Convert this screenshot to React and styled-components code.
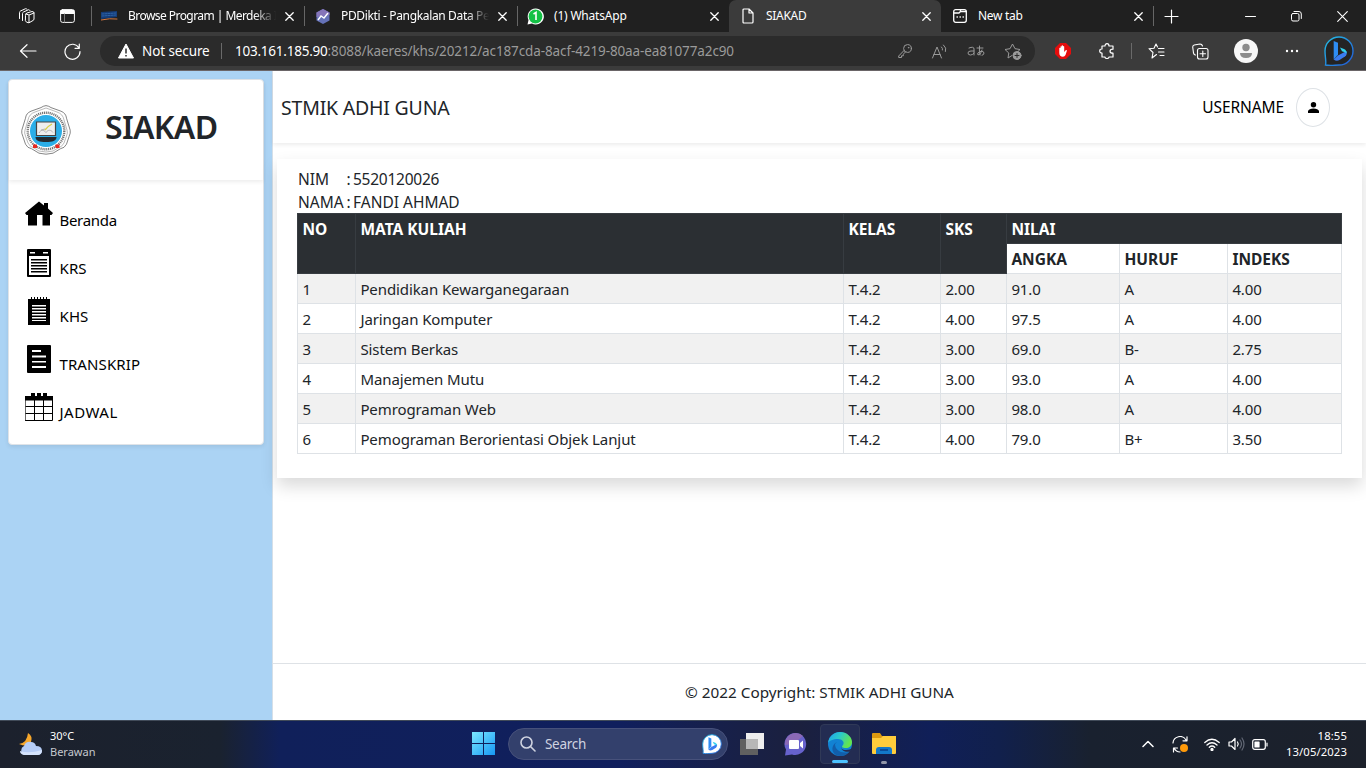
import React from "react";
import styled, { createGlobalStyle, css } from "styled-components";

const Global = createGlobalStyle`
  *, *::before, *::after { box-sizing: border-box; }
  html, body { margin: 0; padding: 0; overflow: hidden; }
  body { font: 15px/24px "Noto Sans", "Open Sans", sans-serif; color: #212529; letter-spacing: -0.1px; }
  svg { display: block; flex: none; }
`;

const Screen = styled.div`
  width: 1366px; height: 768px; display: flex; flex-direction: column; background: #fff; overflow: hidden;
`;

/* ---------- browser chrome ---------- */
const TabStrip = styled.div`
  flex: none; height: 32px; display: flex; background: #202020; color: #fff;
  font-size: 12px; line-height: 16px; letter-spacing: -0.2px;
`;
const StripIcons = styled.div`
  width: 91px; display: flex; align-items: center; gap: 25px; padding-left: 18px;
`;
const Tab = styled.div`
  width: ${(p) => p.$w}px; display: flex; align-items: center; padding: 0 10px 0 ${(p) => p.$pl || 10}px;
  position: relative;
  ${(p) => p.$active && css`background: #3b3b3b; border-radius: 7px 7px 0 0;`}
  ${(p) => p.$line && css`&::before { content: ""; width: 1px; height: 20px; background: #666; position: absolute; left: 0; top: 6px; }`}
`;
const TabTitle = styled.span`
  flex: 1; min-width: 0; margin-left: ${(p) => p.$ml || 9}px; margin-right: 9px; white-space: nowrap;
  letter-spacing: ${(p) => p.$ls || -0.2}px;
  ${(p) => p.$fade && css`mask-image: linear-gradient(90deg, #000 calc(100% - 22px), transparent);`}
`;
const WindowButtons = styled.div`
  flex: 1; display: flex; align-items: center; justify-content: flex-end; gap: 35px; padding-right: 18px;
`;
const NewTab = styled.div`
  width: 35px; display: flex; align-items: center; padding-left: 11px;
  position: relative;
  &::before { content: ""; width: 1px; height: 20px; background: #666; position: absolute; left: 0; top: 6px; }
`;
const Toolbar = styled.div`
  flex: none; height: 39px; display: flex; align-items: center; background: #3b3b3b; border-bottom: 1px solid #6b6668;
  color: #fff; padding-left: 19px;
`;
const NavIcons = styled.div`
  width: 81px; display: flex; gap: 27px; align-items: center;
`;
const Address = styled.div`
  width: 935px; height: 30px; border-radius: 15px; background: #2b2b2b; display: flex; align-items: center;
  padding: 0 13px 0 18px; font-size: 13.5px; line-height: 20px; white-space: nowrap;
`;
const Secure = styled.span`
  margin-left: 8px; width: 79px; letter-spacing: -0.1px;
`;
const Url = styled.span`
  flex: 1; margin-left: 13px; color: #9a9a9a; letter-spacing: -0.11px;
`;
const Host = styled.span`color: #fff; letter-spacing: -0.23px;`;
const Divider = styled.i`
  width: 1px; height: 16px; background: #6a6a6a;
`;
const AddressIcons = styled.div`
  display: flex; align-items: center; gap: 19px; color: #9a9a9a;
`;
const Extensions = styled.div`
  flex: none; display: grid; grid-template-columns: 56px 32px 16px 34px 54px 38px 54px 40px;
  align-items: center; justify-items: center;
`;

/* ---------- page ---------- */
const Page = styled.div`
  flex: 1; display: flex; min-height: 0;
`;
const Side = styled.aside`
  width: 273px; background: #abd3f4; border-right: 1px solid #d5dfe8; padding: 8px 8px 0;
`;
const SideCard = styled.div`
  height: 366px; background: #fff; border: 1px solid #dfe3e8; border-radius: 4px; box-shadow: 0 2px 4px rgba(0,0,0,.08);
`;
const Brand = styled.div`
  height: 100px; display: flex; align-items: center; padding: 0 0 0 12px; box-shadow: 0 2px 4px rgba(0,0,0,.075);
`;
const BrandName = styled.h2`
  margin: -7px 0 0 34px; font-size: 32px; line-height: 40px; font-weight: 600; letter-spacing: -0.7px;
`;
const Menu = styled.nav`
  padding: 21px 0 0 16px; color: #000;
`;
const MenuItem = styled.div`
  height: 48px; display: flex; gap: 6.5px; letter-spacing: ${(p) => p.$ls}px;
`;
const MenuLabel = styled.span`
  margin-top: 6.5px;
`;
const Main = styled.main`
  flex: 1; display: flex; flex-direction: column; min-width: 0;
`;
const Header = styled.header`
  height: 72px; display: flex; align-items: center; padding: 0 36px 0 8px; box-shadow: 0 2px 4px rgba(0,0,0,.075);
`;
const Title = styled.div`
  flex: 1; font-size: 19.5px; line-height: 30px; letter-spacing: -0.2px; padding-top: 1px;
`;
const User = styled.span`
  color: #000; margin-right: 12px; font-size: 15.5px; letter-spacing: -0.1px;
`;
const Avatar = styled.span`
  width: 34px; height: 39px; border: 1px solid #dee2e6; border-radius: 50%; display: flex; align-items: center; justify-content: center;
`;
const Panel = styled.section`
  margin: 16px 4px 0; height: 319px; background: #fff; padding: 8px 20px 0; box-shadow: 0 8px 16px rgba(0,0,0,.15);
`;
const Info = styled.dl`
  margin: 0 0 0 1px; display: grid; grid-template-columns: 48.5px 6.5px 1fr; grid-auto-rows: 23px; white-space: nowrap;
  font-size: 15.5px; letter-spacing: 0;
  dt, dd { margin: 0; }
`;
const Figure = styled.dd`letter-spacing: -0.25px;`;
const Table = styled.table`
  width: 1045px; border-collapse: collapse; table-layout: fixed; line-height: 20px;
  td, th { height: 30px; padding: 5px 4px 0 4.4px; border: 1px solid #dee2e6; text-align: left; vertical-align: top; }
  th { font-size: 15.5px; letter-spacing: 0; }
  tbody tr:nth-child(odd) { background: #f1f1f1; }
`;
const DarkCell = styled.th`
  background: #2b2f33; color: #fff;
  && { border-color: #373c41; }
`;
const Footer = styled.footer`
  margin-top: auto; height: 57px; border-top: 1px solid #dee2e6; text-align: center; padding-top: 16px;
  font-size: 15.3px; letter-spacing: 0;
`;

/* ---------- taskbar ---------- */
const Taskbar = styled.div`
  flex: none; height: 48px; border-top: 1px solid #414b59; display: flex; align-items: center; color: #fff;
  background: linear-gradient(90deg, #1c212d 0, #1a222f 220px, #10205a 280px, #101f5d 620px, #17204a 720px, #1b203e 800px, #101f58 930px, #11204c 1000px, #19212f 1090px, #1c212b 100%);
  font-size: 11px; line-height: 16px; letter-spacing: 0; padding-bottom: 1px;
`;
const Weather = styled.div`
  width: 471px; display: flex; align-items: center; gap: 7px; padding-left: 18px;
`;
const Condition = styled.div`color: #c5c8ce;`;
const Search = styled.div`
  width: 220px; height: 32px; margin: 0 12px; border-radius: 16px; background: #33406c; border: 1px solid #47517b;
  display: flex; align-items: center; padding: 0 5px 0 11px; font-size: 13.5px; color: #cfd3e0; letter-spacing: -0.3px;
`;
const SearchText = styled.span`flex: 1; margin-left: 9px;`;
const Apps = styled.div`
  display: flex; align-items: center;
`;
const AppButton = styled.div`
  width: ${(p) => p.$w}px; margin-left: ${(p) => p.$ml || 0}px; height: 40px; display: flex; align-items: center; justify-content: center; position: relative;
  ${(p) => p.$active && css`background: #232c52; border: 1px solid #303957; border-radius: 4px;`}
  ${(p) => p.$mark && css`&::after { content: ""; position: absolute; bottom: 0; width: ${p.$mark}px; height: 3px; border-radius: 2px; background: ${p.$active ? "#4cc2ff" : "#9297a9"}; }`}
`;
const Tray = styled.div`
  margin-left: auto; display: flex; align-items: center; padding-right: 19px;
`;
const TrayIcon = styled.span`margin-left: ${(p) => p.$ml}px;`;
const Clock = styled.div`
  width: 79px; text-align: right; letter-spacing: 0.1px; font-size: 11.3px;
`;

const Svg = ({ w = 16, h = w, vb = `0 0 ${w} ${h}`, sw = 1, color = "currentColor", children, ...r }) => (
  <svg width={w} height={h} viewBox={vb} fill="none" stroke={color} strokeWidth={sw} strokeLinecap="round" strokeLinejoin="round" {...r}>
    {children}
  </svg>
);
const Close = () => <Svg w={9} sw={1.3}><path d="M.8.8l7.4 7.4M8.2.8L.8 8.2" /></Svg>;

const BingMark = ({ w, h, light }) => (
  <svg width={w} height={h} viewBox="0 0 30 30">
    <defs>
      <linearGradient id={light ? "bl" : "bd"} x1="0" y1="0" x2="1" y2="1">
        <stop stopColor="#24bfe5" /><stop offset="1" stopColor="#2258d8" />
      </linearGradient>
    </defs>
    <path d="M15 1a14 14 0 1 1 0 28c-4 0-8 1-13.500 0 1-3-.5-8-.5-14A14 14 0 0 1 15 1z" fill={light ? "#fff" : "#242424"} stroke={`url(#${light ? "bl" : "bd"})`} strokeWidth="1.400" />
    <path d="M9.700 5l4.300 1.800v12l-4.300 4.700z" fill="#2e8df5" />
    <path d="M9.700 23.500l4.300-4 8.500-4.500q1 3.500-1.500 5.500l-5.500 3.500q-3 1.700-5.800-.5z" fill="#3b7cf0" />
    <path d="M16 11.500l4 1.500q3 1.500 2.500 4.500-.8-1.500-4.500-2.300z" fill="#32d3ed" />
  </svg>
);

const Logo = () => (
  <svg width="50" height="50" viewBox="0 0 50 50" fill="none">
    <path d="M25 .6q3 .4 5 2l10 3.600q5 2 5.500 7l3.700 12q.5 3-1 6l-2.700 8q-2 4-6 4.500l-7.500 4.500q-7 2-14 0L10.500 43.700q-4-.5-6-4.500l-2.700-8q-1.500-3-1-6l3.700-12q.5-5 5.500-7L20 2.600q2-1.600 5-2z" stroke="#777" strokeWidth=".9" />
    <path d="M25 3l11 4q6 2 7 8l3 10q1 3-.5 6l-2.500 7q-2 4-6 5l-5 3q-7 2-14 0l-5-3q-4-1-6-5l-2.500-7Q3 28 4 25l3-10q1-6 7-8z" stroke="#aaa" strokeWidth=".8" />
    <circle cx="25" cy="26" r="18.300" stroke="#444" strokeWidth="2.400" strokeDasharray="1 .7" pathLength="100" opacity=".75" />
    <circle cx="25" cy="26" r="16" fill="#2aaee8" />
    <path d="M15.500 17h19v13.500h-19z" fill="#eee" stroke="#444" strokeWidth="1.200" />
    <path d="M18 28c2-4 5-3 7-.5 2-3 5-3 7 0M20 25l4-1" stroke="#999" strokeWidth=".7" />
    <path d="M24 25q3-4 7-6" stroke="#d9cf45" strokeWidth="1.300" />
    <path d="M14.500 32h21c0 4-4 5-10.500 5s-10.500-1-10.500-5z" fill="#242b31" />
    <path d="M12 39.500h4v3.500h-4zM34.500 39.500h4v3.500h-4z" fill="#e8271f" />
  </svg>
);

const menu = [
  ["Beranda", -0.3, <path d="M14 .5l5 4V2h4v5.500l5 4.500-1.500 2H25v10.500h-7.500V14h-5.500v10.500H3V14H1.500L0 12z" fill="#000" stroke="none" />],
  ["KRS", 0.1, <g stroke="none"><path fillRule="evenodd" d="M3 0h22q1 0 1 1v26q0 1-1 1H3q-1 0-1-1V1q0-1 1-1zm1 7v19h20V7zM5 3v1.500h5V3zm13 0v1.500h5V3z" fill="#000" /><path d="M6 10h16v1.500H6zm0 3h16v1.500H6zm0 3h16v1.500H6zm0 3h16v1.500H6zm0 3h16v1.500H6z" fill="#000" /></g>],
  ["KHS", 0.1, <g stroke="none"><path d="M3 2h22v26H3zM6 0h1v3H6zm3 0h1v3H9zm3 0h1v3h-1zm3 0h1v3h-1zm3 0h1v3h-1zm3 0h1v3h-1z" fill="#000" /><path d="M7 8h14v1.500H7zm0 3h14v1.500H7zm0 3h14v1.500H7zm0 3h14v1.500H7zm0 3h14v1.500H7zm0 3h14v1H7z" fill="#fff" /></g>],
  ["TRANSKRIP", 0.1, <g stroke="none"><rect x="2" width="24" height="28" rx="1" fill="#000" /><path d="M7 5h9v2H7zm0 5.500h14v2H7zM7 16h14v1.500H7zm0 5h14v2H7z" fill="#fff" /></g>],
  ["JADWAL", 0.5, <g stroke="none"><path d="M6 0h4v4H6zm6 0h4v4h-4zm6 0h4v4h-4zM0 3h28v4H0z" fill="#000" /><path d="M.5 7h27v20.500H.5zM9.500 7v20M18.500 7v20M1 13.500h27M1 20.500h27" stroke="#000" /></g>],
];

const rows = [
  ["1", "Pendidikan Kewarganegaraan", "T.4.2", "2.00", "91.0", "A", "4.00"],
  ["2", "Jaringan Komputer", "T.4.2", "4.00", "97.5", "A", "4.00"],
  ["3", "Sistem Berkas", "T.4.2", "3.00", "69.0", "B-", "2.75"],
  ["4", "Manajemen Mutu", "T.4.2", "3.00", "93.0", "A", "4.00"],
  ["5", "Pemrograman Web", "T.4.2", "3.00", "98.0", "A", "4.00"],
  ["6", "Pemograman Berorientasi Objek Lanjut", "T.4.2", "4.00", "79.0", "B+", "3.50"],
];
const columns = [58, 488, 97, 66, 113, 108, 114];

function BrowserTabs() {
  return (
    <TabStrip>
      <StripIcons>
        <Svg w={17}><path d="M7.500 7q0-1.500 1.500-2l5-1.500q2 0 2 1.500v6q0 1-1 1.500l-4 2.300q-3 0-3.500-1.800zM8 6l3 1 5-2M11 7.500v7M4.500 12.500v-7q0-1 1-1.500l5-2.300q1 0 1.500.8M1.500 10.500V4.500q0-1 1-1.500l5-2.300q1 0 1.500.5" /></Svg>
        <Svg w={15} h={14}><rect x=".6" y=".6" width="13.800" height="12.800" rx="2" /><path d="M1 1.500h13v3H1z" fill="#fff" /><path d="M4.500 5v8" stroke="#777" /></Svg>
      </StripIcons>
      <Tab $w={213} $line>
        <Svg w={17} h={10} stroke="none"><path d="M0 1l16-1v6L0 8z" fill="#153c78" /><path d="M1 3l14-1M1 5l14-1" stroke="#2d62a5" strokeDasharray="2 1" /><path d="M0 9q9-2 16-1" stroke="#d77a42" /></Svg>
        <TabTitle $fade $ml={10} $ls={-0.55}>Browse Program | Merdeka I</TabTitle><Close />
      </Tab>
      <Tab $w={213} $line $pl={12}>
        <svg width="14" height="15"><path d="M7 0l6.500 3.500v8L7 15 .5 11.500v-8z" fill="#6572b8" /><path d="M7 0l6.500 3.500V6L.5 8V3.500z" fill="#8575b9" /><path d="M2 11l3-4 3 2 4-5" stroke="#fff" strokeWidth="1.400" fill="none" /></svg>
        <TabTitle $fade $ml={11} $ls={-0.35}>PDDikti - Pangkalan Data Pe</TabTitle><Close />
      </Tab>
      <Tab $w={212} $line>
        <svg width="17" height="17"><path d="M8.500.5a8 8 0 1 1-3.500 15l-4.500 1L1.500 12A8 8 0 0 1 8.500.5z" fill="#fff" /><circle cx="8.500" cy="8.500" r="6.900" fill="#14c146" /><path d="M6.500 6L9 4.500V12" stroke="#fff" strokeWidth="1.600" fill="none" /></svg>
        <TabTitle $ml={10}>(1) WhatsApp</TabTitle><Close />
      </Tab>
      <Tab $w={212} $active $pl={13}>
        <Svg w={12} h={16} sw={1.2}><path d="M1 2q0-1 1-1h5l4 4v9q0 1-1 1H2q-1 0-1-1zM7 1v4h4" /></Svg>
        <TabTitle $ml={12} $ls={-0.3}>SIAKAD</TabTitle><Close />
      </Tab>
      <Tab $w={212} $pl={12}>
        <Svg w={14} h={14} sw={1.3}><rect x=".7" y=".7" width="12.600" height="12.600" rx="2" /><path d="M1 4h5l1.500-1.500V1M7.500 2.500h5.800M4 8h.4M7 8h.4M10 8h.4" /></Svg>
        <TabTitle $ml={11} $ls={-0.3}>New tab</TabTitle><Close />
      </Tab>
      <NewTab><Svg w={15} sw={1.2}><path d="M7.500 1v13M1 7.500h13" /></Svg></NewTab>
      <WindowButtons>
        <Svg w={11}><path d="M.5 5.500h10" /></Svg>
        <Svg w={11}><rect x=".5" y="2.500" width="7.500" height="7.500" rx="1.500" /><path d="M3 .5h5q2.300 0 2.300 2.500v4.500" /></Svg>
        <Svg w={11} sw={1.1}><path d="M.7.7l9.600 9.600M10.300.7L.7 10.300" /></Svg>
      </WindowButtons>
    </TabStrip>
  );
}

function BrowserToolbar() {
  return (
    <Toolbar>
      <NavIcons>
        <Svg w={18} h={14} sw={1.2}><path d="M17 7H1.500M8 .7L1.500 7 8 13.300" /></Svg>
        <Svg w={17} sw={1.2}><path d="M15 5A7.500 7.500 0 1 0 16 8.500M15.300 1v4.300H11" /></Svg>
      </NavIcons>
      <Address>
        <svg width="16" height="16"><path d="M8 1l7.500 14H.5z" fill="#fff" stroke="#fff" strokeLinejoin="round" /><path d="M8 5.500v5M8 12v1.500" stroke="#2b2b2b" strokeWidth="1.500" /></svg>
        <Secure>Not secure</Secure><Divider />
        <Url><Host>103.161.185.90</Host>:8088/kaeres/khs/20212/ac187cda-8acf-4219-80aa-ea81077a2c90</Url>
        <AddressIcons>
          <Svg w={14}><circle cx="9.500" cy="4.500" r="3.900" /><circle cx="10.500" cy="3.700" r=".3" /><path d="M6 6.500L.7 12v1.500h2.800v-1.700h1.800v-1.600L7.500 8" /></Svg>
          <Svg w={17} h={15}><path d="M1.500 14L6 3l4.500 11M3 10.500h6M10.500 3q1.500 1.500 1 3M12.500 1q3.500 3 2 6.500" /></Svg>
          <Svg w={18} h={14}><path d="M2 4q5-2 5 1v6M7 7H4q-3 0-3 2t2.500 2T7 9M10 4h6M12.500 2q-.5 6 .5 9M15 6q-1 5-4 5-1.500-2 2-3.500 4-1 4 1.500 0 2-2 2.300" /></Svg>
          <Svg w={18} h={17}><path d="M8 12.500L4 15l.8-5L1 6.500l5-.8L8.500 1 11 5.700l5 .8-2 2" /><circle cx="13" cy="12.500" r="4" fill="#9a9a9a" /><path d="M11 12.500h4M13 10.500v4" stroke="#2b2b2b" /></Svg>
        </AddressIcons>
      </Address>
      <Extensions>
        <svg width="16" height="16"><path d="M5 0h6l5 5v6l-5 5H5l-5-5V5z" fill="#e40d0d" /><path d="M4.300 5q.6-.5 1.200 0V3.500q.6-.6 1.200 0V2.600q.6-.6 1.300 0v.7q.7-.5 1.200.2V9l1.500-1.800q1-.3 1.300.4L10.500 12Q9.700 13.800 8 13.800q-3.700 0-3.700-4z" fill="#fff" /></svg>
        <Svg w={16} sw={1.2}><path d="M3 3h3q0-2.300 2-2.300T10 3h4v3.200q-3 0-3 2t3 2V14h-4q0 1.500-2 1.500T6 14H3v-4Q.7 10 .7 8T3 6z" /></Svg>
        <Divider />
        <Svg w={17} h={16} sw={1.1}><path d="M8.500 11.500L4 15l1-5.500-4-3.800 5-.5L8 1l1.500 3M10.500 5.500H16M10.500 9H16M12 12.500h4" /></Svg>
        <Svg w={17} sw={1.1}><rect x="5.500" y="5.500" width="10.500" height="10.500" rx="2" /><path d="M10.800 8v5.500M8 10.800h5.500M3.500 12Q2 12 1.500 10l-.8-6q0-1.500 1.500-2L8 1q2 0 2.500 2" /></Svg>
        <svg width="24" height="24"><circle cx="12" cy="12" r="12" fill="#f7f7f7" /><circle cx="12" cy="8.500" r="3.700" fill="#8c8c8c" /><path d="M6 14h12q0 5-6 5t-6-5z" fill="#8c8c8c" /></svg>
        <svg width="14" height="4"><g fill="#fff"><circle cx="2" cy="2" r="1.200" /><circle cx="7" cy="2" r="1.200" /><circle cx="12" cy="2" r="1.200" /></g></svg>
        <BingMark w={30} h={30} />
      </Extensions>
    </Toolbar>
  );
}

function Sidebar() {
  return (
    <Side>
      <SideCard>
        <Brand><Logo /><BrandName>SIAKAD</BrandName></Brand>
        <Menu>
          {menu.map(([label, ls, icon]) => (
            <MenuItem key={label} $ls={ls}><Svg w={28} h={28}>{icon}</Svg><MenuLabel>{label}</MenuLabel></MenuItem>
          ))}
        </Menu>
      </SideCard>
    </Side>
  );
}

function Grades() {
  return (
    <Table>
      <colgroup>{columns.map((w, i) => <col key={i} width={w} />)}</colgroup>
      <thead>
        <tr>
          {["NO", "MATA KULIAH", "KELAS", "SKS"].map((h) => <DarkCell key={h} rowSpan={2}>{h}</DarkCell>)}
          <DarkCell colSpan={3}>NILAI</DarkCell>
        </tr>
        <tr><th>ANGKA</th><th>HURUF</th><th>INDEKS</th></tr>
      </thead>
      <tbody>
        {rows.map((r) => <tr key={r[0]}>{r.map((c, i) => <td key={i}>{c}</td>)}</tr>)}
      </tbody>
    </Table>
  );
}

function WindowsTaskbar() {
  return (
    <Taskbar>
      <Weather>
        <svg width="25" height="25"><path d="M10 1q5 3 3 9t-12 2q8-1 9-11z" fill="#f7a72b" /><path d="M6 23a5 5 0 0 1 0-9q2-5 7-4 4 0 5 4 6 0 6 5 0 4-5 4z" fill="#b5ccf6" /><path d="M6 23q-4-1-4-4 9 3 22-1 0 5-5 5z" fill="#d5e3fc" /></svg>
        <div>30°C<Condition>Berawan</Condition></div>
      </Weather>
      <svg width="25" height="24"><defs><linearGradient id="win" x1="0" y1="0" x2="1" y2="1"><stop stopColor="#7be8ff" /><stop offset="1" stopColor="#1698f5" /></linearGradient></defs><path d="M1 0h11v11H1zM13 0h11v11H13zM1 12h11v11H1zM13 12h11v11H13z" fill="url(#win)" /></svg>
      <Search>
        <Svg w={16} sw={1.6}><circle cx="6.500" cy="6.500" r="5.500" /><path d="M10.500 10.500L15 15" /></Svg>
        <SearchText>Search</SearchText>
        <BingMark w={20} h={20} light />
      </Search>
      <Apps>
        <AppButton $w={24}><svg width="24" height="22"><path d="M0 6h18v16H0z" fill="#606060" /><path d="M6 0h18v16H6z" fill="#eee" /><path d="M6 6h12v10H6z" fill="#b7b7b7" /></svg></AppButton>
        <AppButton $w={48} $ml={8}><svg width="24" height="23"><path d="M12 0a11 11 0 1 1-4 21.500L1 22.500l1-6A11 11 0 0 1 12 0z" fill="#6762cc" /><path d="M12 0A11 11 0 0 0 1 12q8 0 18-9-3-3-7-3z" fill="#8b69b5" /><path d="M6 7h8q1 0 1 1v7q0 1-1 1H6q-1 0-1-1V8q0-1 1-1zM16 10l3-2.500v8L16 13z" fill="#fff" /></svg></AppButton>
        <AppButton $w={40} $active $mark={16}>
          <svg width="24" height="24" viewBox="0 0 24 24"><defs><linearGradient id="ed" x1="0" y1="0" x2="1" y2=".4"><stop stopColor="#1f9ff0" /><stop offset=".5" stopColor="#2acaca" /><stop offset="1" stopColor="#64e44f" /></linearGradient></defs><circle cx="12" cy="12" r="12" fill="#1282d3" /><path d="M0 11C1 4 6 0 12 0c7 0 12 5 12 10 0 4-3 6-6 6-4 0-5-1-3-3 2-3-1-6-5-6-5 0-9 2-10 4z" fill="url(#ed)" /><path d="M7 12c0 6 6 10 14 8-3 4-8 5-13 3C3 20 3 13 9 10z" fill="#125eaa" /><path d="M14 13c-2 3 0 5 4 5 3 0 5-1 6-2l-2 3.500c-6 1.500-11-3-8-6.500z" fill="#232c52" /></svg>
        </AppButton>
        <AppButton $w={48} $mark={6}><svg width="24" height="22"><path d="M0 1q0-1 1-1h7l2 3h13q1 0 1 1v5H0z" fill="#dc9910" /><path d="M0 5h9l2-2h13v17q0 1-1 1H1q-1 0-1-1z" fill="#ffcc3b" /><path d="M4 21v-4q0-3 3-3h10q3 0 3 3v4z" fill="#1378c9" /><path d="M8 17h8" stroke="#0a4e9b" strokeWidth="2" /></svg></AppButton>
      </Apps>
      <Tray>
        <Svg w={12} h={8} sw={1.5}><path d="M1 6.500l5-5 5 5" /></Svg>
        <TrayIcon $ml={18}><Svg w={17} h={17} sw={1.2}><path d="M1 7a7 7 0 0 1 13-3M15 .8v4h-4M1.500 16v-4h4M2 12q2 4 6 4" /><circle cx="12" cy="12" r="4" fill="#ff9a0a" stroke="none" /></Svg></TrayIcon>
        <TrayIcon $ml={15}><Svg w={16} h={13} sw={1.3}><path d="M.8 4.500q7-6.500 14.400 0M3 7q5-4.500 10 0M5.300 9.300q2.700-2.500 5.400 0" /><circle cx="8" cy="11.500" r="1" fill="#fff" /></Svg></TrayIcon>
        <TrayIcon $ml={8}><Svg w={17} h={14} sw={1.2}><path d="M1 5h2.500L7 1.500v11L3.500 9H1zM9.500 5q1.500 2 0 4" /><path d="M12 3q3 4 0 8M14 1q4 6 0 12" stroke="#626875" /></Svg></TrayIcon>
        <TrayIcon $ml={7}><Svg w={16} h={11} sw={1.2}><rect x=".7" y=".7" width="12.600" height="9.600" rx="2" /><path d="M3 3h4v5H3z" fill="#fff" /><path d="M15 4v3" /></Svg></TrayIcon>
        <Clock>18:55<br />13/05/2023</Clock>
      </Tray>
    </Taskbar>
  );
}

export default function App() {
  return (
    <Screen>
      <Global />
      <BrowserTabs />
      <BrowserToolbar />
      <Page>
        <Sidebar />
        <Main>
          <Header>
            <Title>STMIK ADHI GUNA</Title>
            <User>USERNAME</User>
            <Avatar><svg width="11" height="11"><circle cx="5.500" cy="2.800" r="2.700" /><path d="M0 11V9q1-2.500 5.500-2.500T11 9v2z" /></svg></Avatar>
          </Header>
          <Panel>
            <Info>
              <dt>NIM</dt><dd>:</dd><Figure>5520120026</Figure>
              <dt>NAMA</dt><dd>:</dd><dd>FANDI AHMAD</dd>
            </Info>
            <Grades />
          </Panel>
          <Footer>© 2022 Copyright: STMIK ADHI GUNA</Footer>
        </Main>
      </Page>
      <WindowsTaskbar />
    </Screen>
  );
}
